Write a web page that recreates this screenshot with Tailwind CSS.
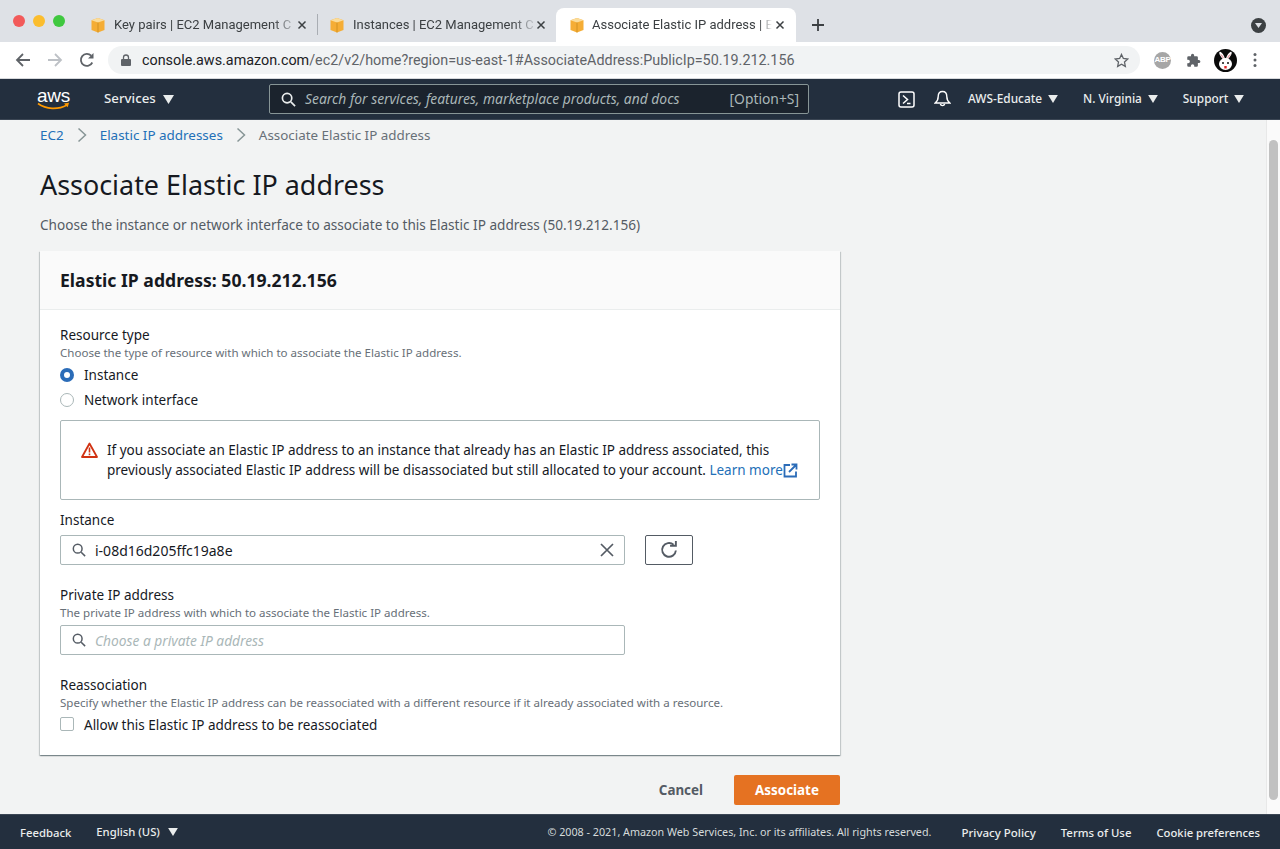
<!DOCTYPE html>
<html lang="en">
<head>
<meta charset="utf-8">
<title>Associate Elastic IP address</title>
<script src="https://cdn.jsdelivr.net/npm/@tailwindcss/browser@4"></script>
</head>
<body class="h-[849px] w-[1280px] overflow-hidden bg-white font-['Noto_Sans',sans-serif] text-[13.5px] text-[#16191f] flex flex-col">

<!-- Tab strip -->
<div class="h-[42px] shrink-0 bg-[#dee1e6] flex items-end relative font-['Roboto',sans-serif] text-[13px] text-[#3c4043]">
  <div class="w-[84px] h-[42px] flex items-center gap-[8px] pl-[13px] shrink-0">
    <span class="w-3 h-3 rounded-full bg-[#f25a5a]"></span>
    <span class="w-3 h-3 rounded-full bg-[#fbbd2e]"></span>
    <span class="w-3 h-3 rounded-full bg-[#3fc83f]"></span>
  </div>
  <div class="w-[234px] h-[34px] flex items-center pl-[6px] shrink-0">
    <svg class="w-4 h-4 shrink-0" viewBox="0 0 16 16"><path fill="#f5ad35" d="M8 1l6.500 2.200V13L8 15.500 1.500 13V3.200z"/><path fill="#fbdc9a" d="M8 1l6.500 2.200L8 5.400 1.500 3.200z"/><path fill="#c98a1e" d="M7.600 5.400h.8v10h-.8z"/></svg>
    <span class="ml-[8px] w-[181px] shrink-0 whitespace-nowrap [mask-image:linear-gradient(to_right,black_88%,rgba(0,0,0,0.15)_100%)]">Key pairs | EC2 Management C</span>
    <svg class="w-[10px] h-[10px] ml-[2px] shrink-0" viewBox="0 0 10 10"><path d="M1.500 1.500l7 7m0-7l-7 7" stroke="#3c4043" stroke-width="1.500"/></svg>
    <span class="ml-auto w-px h-[21px] bg-[#a9adb3] -translate-y-[1px]"></span>
  </div>
  <div class="w-[238px] h-[34px] flex items-center pl-[11px] shrink-0">
    <svg class="w-4 h-4 shrink-0" viewBox="0 0 16 16"><path fill="#f5ad35" d="M8 1l6.500 2.200V13L8 15.500 1.500 13V3.200z"/><path fill="#fbdc9a" d="M8 1l6.500 2.200L8 5.400 1.500 3.200z"/><path fill="#c98a1e" d="M7.600 5.400h.8v10h-.8z"/></svg>
    <span class="ml-[8px] w-[181px] shrink-0 whitespace-nowrap [mask-image:linear-gradient(to_right,black_88%,rgba(0,0,0,0.15)_100%)]">Instances | EC2 Management C</span>
    <svg class="w-[10px] h-[10px] ml-[2px] shrink-0" viewBox="0 0 10 10"><path d="M1.500 1.500l7 7m0-7l-7 7" stroke="#3c4043" stroke-width="1.500"/></svg>
  </div>
  <div class="w-[240px] h-[34px] bg-white rounded-t-[8px] flex items-center pl-[13px] shrink-0">
    <svg class="w-4 h-4 shrink-0" viewBox="0 0 16 16"><path fill="#f5ad35" d="M8 1l6.500 2.200V13L8 15.500 1.500 13V3.200z"/><path fill="#fbdc9a" d="M8 1l6.500 2.200L8 5.400 1.500 3.200z"/><path fill="#c98a1e" d="M7.600 5.400h.8v10h-.8z"/></svg>
    <span class="ml-[7px] w-[180px] shrink-0 whitespace-nowrap [mask-image:linear-gradient(to_right,black_93%,transparent_100%)]">Associate Elastic IP address | E</span>
    <svg class="w-[10px] h-[10px] ml-[3px] shrink-0" viewBox="0 0 10 10"><path d="M1.500 1.500l7 7m0-7l-7 7" stroke="#3c4043" stroke-width="1.500"/></svg>
  </div>
  <div class="h-[34px] flex items-center pl-[16px]">
    <svg class="w-[12px] h-[12px]" viewBox="0 0 12 12"><path d="M6 0v12M0 6h12" stroke="#3c4043" stroke-width="1.800"/></svg>
  </div>
  <div class="ml-auto h-[34px] flex items-center pr-[14px]">
    <span class="w-[15px] h-[15px] rounded-full bg-[#3c4043] flex items-center justify-center">
      <svg class="w-[7px] h-[5px]" viewBox="0 0 7 5"><path d="M0 0h7L3.500 5z" fill="#dee1e6"/></svg>
    </span>
  </div>
</div>

<!-- Address bar -->
<div class="h-[37px] shrink-0 bg-white flex items-center border-b border-[#d7d9dc] relative">
  <div class="w-[108px] flex items-center pl-[15px] gap-[16px] shrink-0">
    <svg class="w-[16px] h-[16px]" viewBox="0 0 16 16"><path d="M15 8H2M8 2L2 8l6 6" fill="none" stroke="#5f6368" stroke-width="1.800"/></svg>
    <svg class="w-[16px] h-[16px]" viewBox="0 0 16 16"><path d="M1 8h13M8 2l6 6-6 6" fill="none" stroke="#bdc1c6" stroke-width="1.800"/></svg>
    <svg class="w-[16px] h-[16px]" viewBox="0 0 16 16"><path d="M13.300 10.500A6 6 0 1 1 12.200 3.700" fill="none" stroke="#5f6368" stroke-width="1.800"/><path d="M14.500 1v5.500H9z" fill="#5f6368"/></svg>
  </div>
  <div class="w-[1032px] h-[28px] rounded-full bg-[#f1f3f4] flex items-center pl-[13px] pr-[11px] font-['Roboto',sans-serif] text-[14.35px] text-[#5f6368] shrink-0">
    <svg class="w-[10px] h-[12px] shrink-0" viewBox="0 0 10 12"><path d="M1 5h8a1 1 0 0 1 1 1v5a1 1 0 0 1-1 1H1a1 1 0 0 1-1-1V6a1 1 0 0 1 1-1z" fill="#5f6368"/><path d="M2.500 5V3.500a2.500 2.500 0 0 1 5 0V5" fill="none" stroke="#5f6368" stroke-width="1.300"/></svg>
    <span class="ml-[11px] pt-[2px] whitespace-nowrap"><span class="text-[#202124]">console.aws.amazon.com</span>/ec2/v2/home?region=us-east-1#AssociateAddress:PublicIp=50.19.212.156</span>
    <svg class="w-[15px] h-[15px] ml-auto" viewBox="0 0 16 16"><path d="M8 1.500l2 4.300 4.700.6-3.500 3.200.9 4.700L8 12l-4.100 2.300.9-4.700L1.300 6.400 6 5.800z" fill="none" stroke="#5f6368" stroke-width="1.400"/></svg>
  </div>
  <span class="ml-[14px] w-[17px] h-[17px] rounded-full bg-[#a6a6a6] text-white text-[8px] tracking-[-0.3px] font-bold flex items-center justify-center font-['Liberation_Sans',sans-serif] shrink-0">ABP</span>
  <svg class="ml-[15px] w-[15px] h-[15px] shrink-0" viewBox="0 0 24 24"><path fill="#5f6368" d="M20.500 11H19V7a2 2 0 0 0-2-2h-4V3.500a2.500 2.500 0 0 0-5 0V5H4a2 2 0 0 0-2 2v3.800h1.500a2.700 2.700 0 0 1 0 5.400H2V20a2 2 0 0 0 2 2h3.800v-1.500a2.700 2.700 0 0 1 5.400 0V22H17a2 2 0 0 0 2-2v-4h1.500a2.500 2.500 0 0 0 0-5z"/></svg>
  <svg class="ml-[13px] w-[23px] h-[23px] shrink-0" viewBox="0 0 23 23"><circle cx="11.500" cy="11.500" r="11.500" fill="#0a0a0a"/><path d="M9.500 11C7 8 4.500 4.500 5.500 3S10.500 6 11 10zM13.500 11c2.500-3 5-6.500 4-8S12.500 6 12 10z" fill="#fff"/><path d="M9 9.500C7.500 7.500 6.200 5.500 6.500 5S9.500 7 10 9zM14 9.500c1.500-2 2.800-4 2.500-4.500S13.500 7 13 9z" fill="#e8a0a8"/><ellipse cx="11.500" cy="15" rx="6.500" ry="6" fill="#fff"/><circle cx="9" cy="14" r="1" fill="#111"/><circle cx="14" cy="14" r="1" fill="#111"/><path d="M10.300 17h2.400v2.500h-2.400z" fill="#d22"/></svg>
  <svg class="ml-[16px] w-[4px] h-[16px] shrink-0" viewBox="0 0 4 16"><circle cx="2" cy="2.500" r="1.500" fill="#5f6368"/><circle cx="2" cy="8" r="1.500" fill="#5f6368"/><circle cx="2" cy="13.500" r="1.500" fill="#5f6368"/></svg>
</div>

<!-- AWS nav -->
<div class="h-[41px] shrink-0 bg-[#232f3e] flex items-center border-b border-[#3b4654] text-[#eaeded]">
  <div class="w-[104px] shrink-0 pl-[37px] flex flex-col items-start">
    <span class="font-['Liberation_Sans',sans-serif] text-[19px] leading-[15px] text-white tracking-[-0.300px]">aws</span>
    <svg class="w-[33px] h-[9px] -mt-[1px]" viewBox="0 0 33 9"><path d="M1 1.500c8 6 20 6.500 29 1.500" fill="none" stroke="#f90" stroke-width="1.600"/><path d="M27 1.500l5-.8-1.300 4.600z" fill="#f90"/></svg>
  </div>
  <div class="w-[165px] shrink-0 flex items-center gap-[7px] text-[13.3px] font-medium whitespace-nowrap">Services
    <svg class="w-[11px] h-[9px]" viewBox="0 0 11 9"><path d="M0 0h11L5.500 9z" fill="#eaeded"/></svg>
  </div>
  <div class="w-[540px] h-[30px] shrink-0 rounded-[2px] border border-[#879596] bg-[#1b232d] flex items-center pl-[11px] pr-[9px] text-[13.85px] text-[#aab7b8]">
    <svg class="w-[15px] h-[15px] shrink-0" viewBox="0 0 16 16"><circle cx="6.500" cy="6.500" r="5" fill="none" stroke="#eaeded" stroke-width="1.800"/><path d="M10.500 10.500L15 15" stroke="#eaeded" stroke-width="1.800"/></svg>
    <span class="ml-[9px] italic whitespace-nowrap">Search for services, features, marketplace products, and docs</span>
    <span class="ml-auto whitespace-nowrap">[Option+S]</span>
  </div>
  <svg class="ml-[89px] w-[17px] h-[17px] shrink-0" viewBox="0 0 17 17"><rect x="1" y="1" width="15" height="15" rx="2" fill="none" stroke="#fff" stroke-width="1.500"/><path d="M5 4.500L9.500 8.500 5 12.500M9 12.500h3.500" fill="none" stroke="#fff" stroke-width="1.500"/></svg>
  <svg class="ml-[19px] w-[17px] h-[18px] shrink-0" viewBox="0 0 17 18"><path d="M8.500 1.500c-3 0-4.300 2.300-4.300 5 0 3-1.200 5-3 6.500h14.600c-1.800-1.500-3-3.500-3-6.500 0-2.700-1.300-5-4.300-5z" fill="none" stroke="#fff" stroke-width="1.400"/><path d="M6.300 14a2.300 2.300 0 0 0 4.400 0" fill="none" stroke="#fff" stroke-width="1.400"/></svg>
  <div class="ml-[17px] flex items-center gap-[6px] text-[11.85px] font-medium whitespace-nowrap">AWS-Educate <svg class="w-[10px] h-[8px]" viewBox="0 0 11 9"><path d="M0 0h11L5.500 9z" fill="#eaeded"/></svg></div>
  <div class="ml-[25px] flex items-center gap-[6px] text-[11.85px] font-medium whitespace-nowrap">N. Virginia <svg class="w-[10px] h-[8px]" viewBox="0 0 11 9"><path d="M0 0h11L5.500 9z" fill="#eaeded"/></svg></div>
  <div class="ml-[25px] flex items-center gap-[6px] text-[11.85px] font-medium whitespace-nowrap">Support <svg class="w-[10px] h-[8px]" viewBox="0 0 11 9"><path d="M0 0h11L5.500 9z" fill="#eaeded"/></svg></div>
</div>

<!-- Page area with scrollbar -->
<div class="flex-1 min-h-0 flex bg-[#f2f3f3]">
  <main class="flex-1 min-w-0 pl-[40px] overflow-hidden">
    <div class="w-[800px]">
      <nav class="h-[30px] flex items-center text-[13.45px] whitespace-nowrap">
        <span class="text-[#2370b8]">EC2</span>
        <svg class="w-[10px] h-[16px] mx-[13px]" viewBox="0 0 10 16"><path d="M1.500 1.500L8.500 8l-7 6.500" fill="none" stroke="#879596" stroke-width="1.500"/></svg>
        <span class="text-[#2370b8]">Elastic IP addresses</span>
        <svg class="w-[10px] h-[16px] mx-[13px]" viewBox="0 0 10 16"><path d="M1.500 1.500L8.500 8l-7 6.500" fill="none" stroke="#879596" stroke-width="1.500"/></svg>
        <span class="text-[#687078] text-[13.4px]">Associate Elastic IP address</span>
      </nav>
      <h1 class="mt-[15px] h-[40px] leading-[40px] text-[26.9px] font-normal text-[#16191f] whitespace-nowrap">Associate Elastic IP address</h1>
      <p class="mt-[10px] h-[20px] leading-[20px] text-[13.6px] text-[#545b64] whitespace-nowrap">Choose the instance or network interface to associate to this Elastic IP address (50.19.212.156)</p>

      <section class="mt-[16px] h-[504px] bg-white shadow-[0_1px_1px_0_rgba(0,28,36,0.3),1px_1px_1px_0_rgba(0,28,36,0.15),-1px_1px_1px_0_rgba(0,28,36,0.15)] flex flex-col">
        <header class="h-[59px] shrink-0 bg-[#fafafa] border-b border-[#eaeded] px-[20px] flex items-center text-[17.6px] font-bold whitespace-nowrap">Elastic IP address: 50.19.212.156</header>
        <div class="px-[20px] pt-[15px]">
          <div class="h-[20px] leading-[20px]">Resource type</div>
          <div class="h-[16px] leading-[16px] text-[11.56px] text-[#687078] whitespace-nowrap">Choose the type of resource with which to associate the Elastic IP address.</div>
          <div class="mt-[1px] h-[25px] flex items-center gap-[10px]">
            <span class="w-[14px] h-[14px] rounded-full bg-[#2b6cb8] flex items-center justify-center"><span class="w-[6px] h-[6px] rounded-full bg-white"></span></span>
            <span class="pt-[2px]">Instance</span>
          </div>
          <div class="h-[25px] flex items-center gap-[10px]">
            <span class="w-[14px] h-[14px] rounded-full border border-[#aab7b8] bg-white"></span>
            <span class="pt-[2px]">Network interface</span>
          </div>
          <div class="mt-[8px] h-[80px] border border-[#aab7b8] rounded-[2px] pl-[20px] flex items-center">
            <svg class="w-[17px] h-[16px] shrink-0 self-start mt-[21px]" viewBox="0 0 17 16"><path d="M8.500 1.500L16 15H1z" fill="none" stroke="#d13212" stroke-width="1.800" stroke-linejoin="round"/><path d="M7.700 5.500h1.600v5H7.700zM7.700 11.500h1.600v1.700H7.700z" fill="#d13212"/></svg>
            <p class="ml-[9px] leading-[20px] whitespace-nowrap">If you associate an Elastic IP address to an instance that already has an Elastic IP address associated, this<br>previously associated Elastic IP address will be disassociated but still allocated to your account. <span class="text-[#2370b8]">Learn more</span><svg class="inline w-[15px] h-[15px] -mt-[2px] align-middle" viewBox="0 0 15 15"><path d="M7 2H1.500v11.500H13V8.500" fill="none" stroke="#2b6cb8" stroke-width="1.800"/><path d="M6 9l7-7M8.500 1.500h5v5" fill="none" stroke="#2b6cb8" stroke-width="1.800"/></svg></p>
          </div>
          <div class="mt-[10px] h-[20px] leading-[20px]">Instance</div>
          <div class="mt-[5px] flex items-center">
            <div class="w-[565px] h-[30px] border border-[#aab7b8] rounded-[2px] bg-white flex items-center pl-[11px] pr-[10px]">
              <svg class="w-[14px] h-[14px] shrink-0" viewBox="0 0 16 16"><circle cx="6.500" cy="6.500" r="5" fill="none" stroke="#545b64" stroke-width="1.700"/><path d="M10.500 10.500L15 15" stroke="#545b64" stroke-width="1.700"/></svg>
              <span class="ml-[9px] text-[14px] pt-[1px]">i-08d16d205ffc19a8e</span>
              <svg class="ml-auto w-[14px] h-[14px]" viewBox="0 0 14 14"><path d="M1 1l12 12M13 1L1 13" stroke="#545b64" stroke-width="1.700"/></svg>
            </div>
            <div class="ml-[20px] w-[48px] h-[30px] border border-[#545b64] rounded-[2px] bg-white flex items-center justify-center">
              <svg class="w-[18px] h-[18px]" viewBox="0 0 17 17"><path d="M15 9A6.500 6.500 0 1 1 12.800 3.500" fill="none" stroke="#545b64" stroke-width="1.800"/><path d="M9.500 4.500h5.500V0" fill="none" stroke="#545b64" stroke-width="1.800"/></svg>
            </div>
          </div>
          <div class="mt-[20px] h-[20px] leading-[20px]">Private IP address</div>
          <div class="h-[16px] leading-[16px] text-[11.56px] text-[#687078] whitespace-nowrap">The private IP address with which to associate the Elastic IP address.</div>
          <div class="mt-[4px] w-[565px] h-[30px] border border-[#aab7b8] rounded-[2px] bg-white flex items-center pl-[11px]">
            <svg class="w-[14px] h-[14px] shrink-0" viewBox="0 0 16 16"><circle cx="6.500" cy="6.500" r="5" fill="none" stroke="#545b64" stroke-width="1.700"/><path d="M10.500 10.500L15 15" stroke="#545b64" stroke-width="1.700"/></svg>
            <span class="ml-[9px] italic text-[#aab7b8] text-[13.75px] pt-[2px]">Choose a private IP address</span>
          </div>
          <div class="mt-[20px] h-[20px] leading-[20px]">Reassociation</div>
          <div class="h-[16px] leading-[16px] text-[11.56px] text-[#687078] whitespace-nowrap">Specify whether the Elastic IP address can be reassociated with a different resource if it already associated with a resource.</div>
          <div class="mt-[2px] h-[22px] flex items-center gap-[10px]">
            <span class="w-[14px] h-[14px] rounded-[2px] border border-[#aab7b8] bg-white"></span>
            <span class="pt-[2px]">Allow this Elastic IP address to be reassociated</span>
          </div>
        </div>
      </section>

      <div class="mt-[20px] flex items-center justify-end">
        <span class="text-[#545b64] font-bold text-[13.4px]">Cancel</span>
        <span class="ml-[31px] w-[106px] h-[30px] rounded-[2px] bg-[#e57222] text-white font-bold text-[13.4px] flex items-center justify-center">Associate</span>
      </div>
    </div>
  </main>
  <div class="w-[14px] shrink-0 bg-[#fafafa] border-l border-[#e8e8e8] pt-[20px] pl-[2px] pr-[2px]">
    <div class="h-[660px] w-[9px] rounded-full bg-[#c1c1c1]"></div>
  </div>
</div>

<!-- Footer -->
<footer class="h-[35px] shrink-0 bg-[#232f3e] border-t border-[#3b4654] flex items-center text-[11.3px] text-[#eaeded] font-medium whitespace-nowrap">
  <span class="ml-[20px] translate-y-[1px]">Feedback</span>
  <span class="ml-[25px]">English (US)</span>
  <svg class="ml-[8px] w-[10px] h-[8px]" viewBox="0 0 11 9"><path d="M0 0h11L5.500 9z" fill="#eaeded"/></svg>
  <span class="ml-auto text-[10.75px] text-[#d5dbdb] font-normal">© 2008 - 2021, Amazon Web Services, Inc. or its affiliates. All rights reserved.</span>
  <span class="ml-[30px] translate-y-[1px] text-[11.5px]">Privacy Policy</span>
  <span class="ml-[25px] translate-y-[1px] text-[11.4px]">Terms of Use</span>
  <span class="ml-[25px] mr-[20px] translate-y-[1px] text-[11.25px]">Cookie preferences</span>
</footer>
</body>
</html>
